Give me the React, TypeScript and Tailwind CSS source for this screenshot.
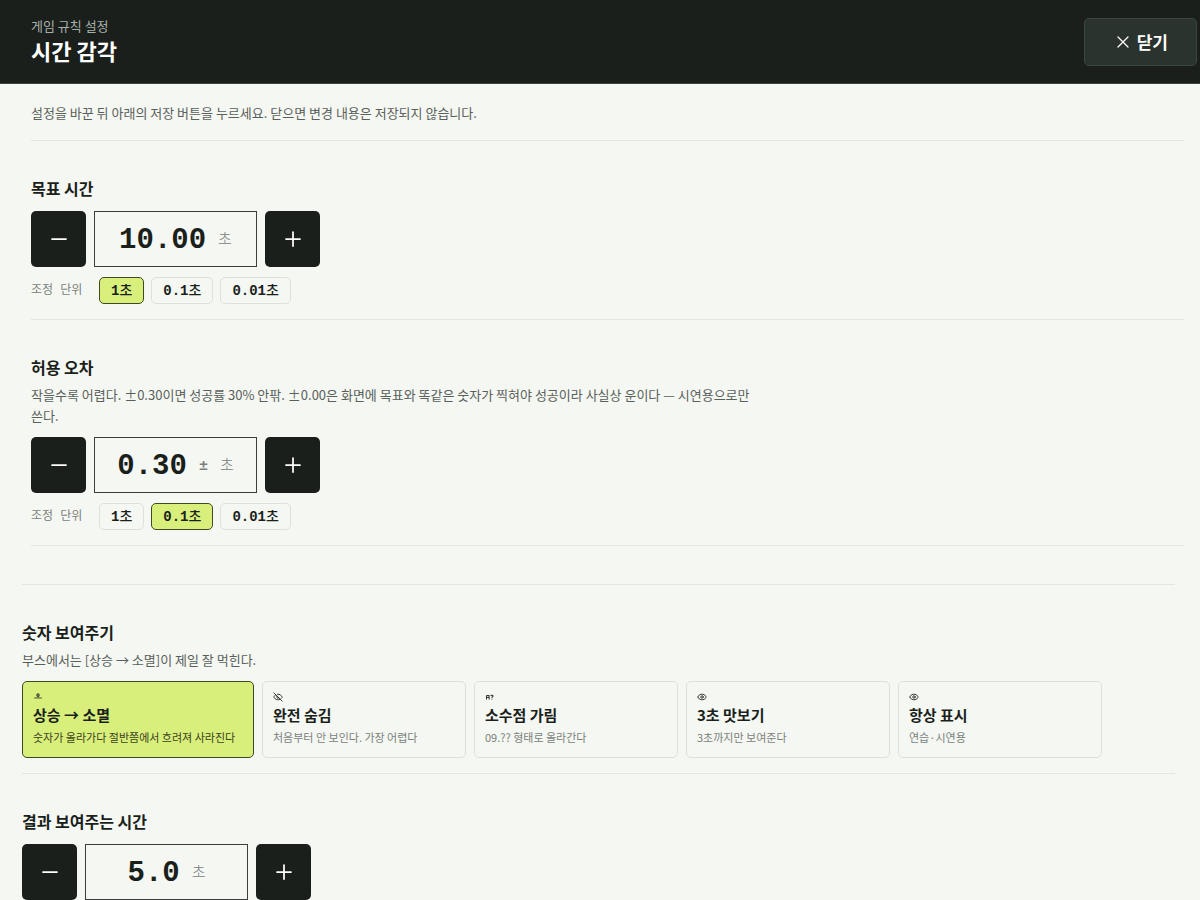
import { useState } from 'react';
import type { ReactNode } from 'react';
import { Eye, EyeOff, Minus, Plus, X } from 'lucide-react';

const MONO = "font-['Liberation_Mono','Noto_Sans_CJK_KR',monospace]";

const STEPS = [1, 0.1, 0.01];

function RiseIcon() {
  return (
    <svg width="10" height="10" viewBox="0 0 10 10" fill="none" stroke="currentColor" strokeWidth="1">
      <circle cx="5" cy="3" r="1.2" />
      <path d="M1 6h8M3.5 5.2l1.5-.7 1.5.7" strokeWidth="0.7" />
    </svg>
  );
}

function MaskIcon() {
  return (
    <svg width="10" height="10" viewBox="0 0 10 10" fill="none" stroke="currentColor" strokeWidth="0.9">
      <path d="M1.5 7.5v-4h2.6v4M1.5 5.4h2.6" />
      <path d="M5.8 4V3.3h2.2v1.5H6.9v1M6.9 6.6v.9" />
    </svg>
  );
}

const MODES = [
  { id: 'fade', name: '상승 → 소멸', note: '숫자가 올라가다 절반쯤에서 흐려져 사라진다', icon: <RiseIcon /> },
  { id: 'hidden', name: '완전 숨김', note: '처음부터 안 보인다. 가장 어렵다', icon: <EyeOff size={10} /> },
  { id: 'mask', name: '소수점 가림', note: '09.?? 형태로 올라간다', icon: <MaskIcon /> },
  { id: 'peek', name: '3초 맛보기', note: '3초까지만 보여준다', icon: <Eye size={10} /> },
  { id: 'always', name: '항상 표시', note: '연습·시연용', icon: <Eye size={10} /> },
];

function Section({ title, note, children }: { title: string; note?: string; children: ReactNode }) {
  return (
    <section className="border-b border-[#e3e6e1] pt-[35px] pb-[15px]">
      <h2 className="text-base leading-6 font-bold">{title}</h2>
      {note && <p className="mt-[5px] max-w-[724px] text-[13px] leading-[21px] text-[#59605b]">{note}</p>}
      <div className="mt-[11px]">{children}</div>
    </section>
  );
}

type StepperProps = {
  label: string;
  initial: number;
  digits: number;
  initialStep: number;
  plusMinus?: boolean;
  fixedStep?: boolean;
};

function Stepper({ label, initial, digits, initialStep, plusMinus, fixedStep }: StepperProps) {
  const [value, setValue] = useState(initial);
  const [step, setStep] = useState(initialStep);

  const change = (delta: number) => setValue((v) => Math.max(0, v + delta));

  return (
    <div className={MONO}>
      <div className="flex gap-2">
        <button
          aria-label={`${label} 줄이기`}
          onClick={() => change(-step)}
          className="flex h-14 w-[55px] items-center justify-center rounded-[5px] bg-[#1a1f1c] text-white"
        >
          <Minus size={24} strokeWidth={1.75} />
        </button>
        <div className="flex h-14 w-[163px] items-center justify-center gap-3 border border-[#3a3f3c] pt-1">
          <output aria-label={label} className="text-[29px] leading-8 font-bold">
            {value.toFixed(digits)}
          </output>
          <span className="flex gap-3 text-[15px] leading-5 text-[#7a817c]">
            {plusMinus && <span className="font-bold">±</span>}
            <span className="font-light">초</span>
          </span>
        </div>
        <button
          aria-label={`${label} 늘리기`}
          onClick={() => change(step)}
          className="flex h-14 w-[55px] items-center justify-center rounded-[5px] bg-[#1a1f1c] text-white"
        >
          <Plus size={24} strokeWidth={1.75} />
        </button>
      </div>
      {!fixedStep && (
        <div className="mt-[10px] flex items-center gap-[7px]">
          <span className="w-[61px] text-xs whitespace-nowrap text-[#7a817c]">조정 단위</span>
          {STEPS.map((s) => (
            <button
              key={s}
              aria-pressed={step === s}
              onClick={() => setStep(s)}
              className={`h-[27px] rounded-[5px] border px-[11px] text-sm leading-5 font-bold ${
                step === s ? 'border-[#3f4a22] bg-[#d9ef7b]' : 'border-[#dde0db]'
              }`}
            >
              {s}
              <span className="font-medium">초</span>
            </button>
          ))}
        </div>
      )}
    </div>
  );
}

export default function App() {
  const [mode, setMode] = useState('fade');

  return (
    <div className="min-h-screen bg-[#f5f7f2] font-['Noto_Sans_CJK_KR',sans-serif] text-[#1a1f1c]">
      <header className="flex items-center justify-between border-b border-[#3a443d] bg-[#1a1f1c] pt-[18px] pr-[3px] pb-[17px] pl-[31px]">
        <div>
          <p className="text-[13px] leading-4 text-[#a9b0ab]">게임 규칙 설정</p>
          <h1 className="text-[22px] leading-8 font-bold text-white">시간 감각</h1>
        </div>
        <button className="flex h-12 items-center gap-1 rounded-[5px] border border-[#3c4740] bg-[#2a332d] px-7 text-[17px] leading-6 font-bold text-white">
          <X size={20} strokeWidth={1.5} />
          닫기
        </button>
      </header>

      <main>
        <div className="mr-4 ml-[31px]">
          <p className="border-b border-[#e3e6e1] pt-[19px] pb-[17px] text-[13px] leading-5 text-[#59605b]">
            설정을 바꾼 뒤 아래의 저장 버튼을 누르세요. 닫으면 변경 내용은 저장되지 않습니다.
          </p>
          <Section title="목표 시간">
            <Stepper label="목표 시간" initial={10} digits={2} initialStep={1} />
          </Section>
          <Section
            title="허용 오차"
            note="작을수록 어렵다. ±0.30이면 성공률 30% 안팎. ±0.00은 화면에 목표와 똑같은 숫자가 찍혀야 성공이라 사실상 운이다 — 시연용으로만 쓴다."
          >
            <Stepper label="허용 오차" initial={0.3} digits={2} initialStep={0.1} plusMinus />
          </Section>
        </div>

        <div className="mt-[38px] mr-[25px] ml-[22px] border-t border-[#e3e6e1]">
          <Section title="숫자 보여주기" note="부스에서는 [상승 → 소멸]이 제일 잘 먹힌다.">
            <div className="flex flex-wrap gap-2">
              {MODES.map((m) => (
                <button
                  key={m.id}
                  aria-pressed={mode === m.id}
                  onClick={() => setMode(m.id)}
                  className={`flex min-w-[204px] flex-col items-start rounded-[5px] border px-[10px] pt-[10px] pb-[11px] text-left first:min-w-[232px] ${
                    mode === m.id ? 'border-[#3f4a22] bg-[#d9ef7b]' : 'border-[#dde0db]'
                  }`}
                >
                  {m.icon}
                  <span className="mt-[2px] text-[15px] leading-[22px] font-bold">{m.name}</span>
                  <span
                    className={`mt-[2px] text-[11px] leading-[18px] ${
                      mode === m.id ? 'text-[#3a4220]' : 'text-[#7a817c]'
                    }`}
                  >
                    {m.note}
                  </span>
                </button>
              ))}
            </div>
          </Section>
          <Section title="결과 보여주는 시간">
            <Stepper label="결과 보여주는 시간" initial={5} digits={1} initialStep={0.5} fixedStep />
          </Section>
        </div>
      </main>
    </div>
  );
}
